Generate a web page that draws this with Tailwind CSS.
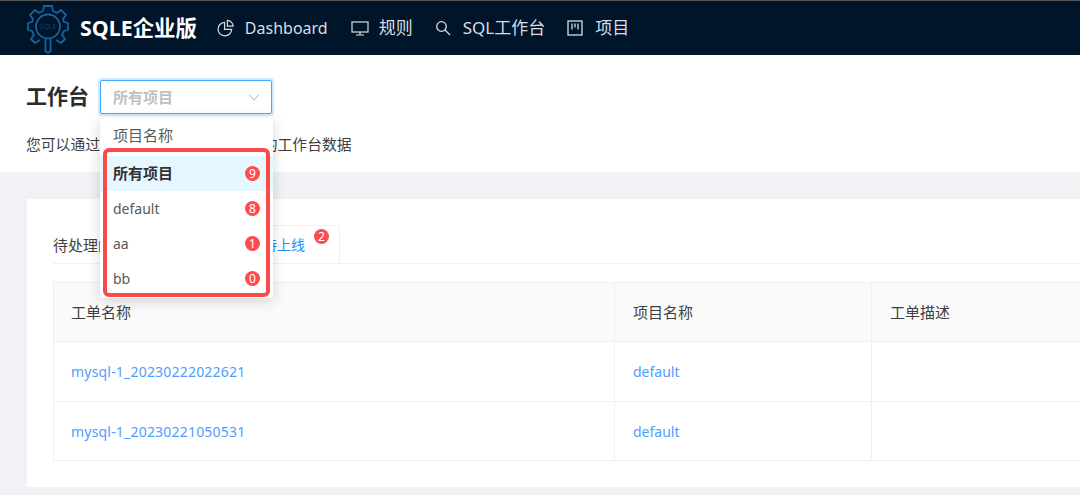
<!DOCTYPE html>
<html lang="zh-CN">
  <head>
    <meta charset="UTF-8" />
    <title>SQLE</title>
    <script src="https://cdn.jsdelivr.net/npm/@tailwindcss/browser@4"></script>
  </head>
  <body class="relative w-[1080px] h-[495px] overflow-hidden bg-[#f0f2f5] font-['Noto_Sans','Noto_Sans_CJK_SC',sans-serif] text-[#3f3f3f]">
    <!-- Top nav -->
    <header class="h-[55px] bg-[#001529] border-t border-[#555] flex items-center pl-[26px] text-[16px] text-[#d8dde2]">
      <svg class="w-[44px] h-[52px] shrink-0" viewBox="0 0 44 52" fill="none" stroke="#14659c" stroke-width="1.8" stroke-linejoin="round">
        <path d="M17 9L18 4H26L27 9L31 11L35 8L40 13L37 17L38 20L42 21V28L38 29L36 33L39 37L35 41L30 38M14 38L9 41L5 37L8 33L6 29L2 28V21L6 20L7 17L4 13L9 8L13 11L17 9" />
        <circle cx="22" cy="24.500" r="12" />
        <path d="M19.500 37v11a2.500 2.500 0 0 0 5 0V37" />
        <text x="22" y="27" font-size="7" fill="#0f3f60" stroke="none" text-anchor="middle">SQLE</text>
      </svg>
      <span class="ml-[10px] text-[21.4px] font-bold text-white">SQLE企业版</span>
      <svg class="ml-[20px] w-[17px] h-[18px]" viewBox="0 0 18 18" fill="none" stroke="currentColor" stroke-width="1.3">
        <path d="M8 3a7.200 7.200 0 1 0 7.500 7.500H8z" />
        <path d="M11 1v6h6a6.200 6.200 0 0 0-6-6z" />
      </svg>
      <span class="ml-[11px]">Dashboard</span>
      <svg class="ml-[23px] w-[18px] h-[16px]" viewBox="0 0 18 16" fill="none" stroke="currentColor" stroke-width="1.2">
        <rect x="1" y="2" width="16" height="10" />
        <path d="M9 12v3M5 15h8" />
      </svg>
      <span class="ml-[10px] text-[17px]">规则</span>
      <svg class="ml-[22px] w-[16px] h-[16px]" viewBox="0 0 16 16" fill="none" stroke="currentColor" stroke-width="1.3">
        <circle cx="6.500" cy="6.500" r="4.800" />
        <path d="M10 10l5 5" />
      </svg>
      <span class="ml-[12px] text-[17px]">SQL工作台</span>
      <svg class="ml-[22px] w-[16px] h-[16px]" viewBox="0 0 16 16" fill="none" stroke="currentColor" stroke-width="1.3">
        <rect x="1" y="1" width="14" height="14" />
        <path d="M5 3.500v6M8 3.500v4M11 3.500v6" />
      </svg>
      <span class="ml-[12px] text-[17px]">项目</span>
    </header>

    <!-- Page title -->
    <section class="h-[117px] bg-white pl-[26px] pt-[25px]">
      <div class="flex items-center h-[34px]">
        <h1 class="text-[21px] font-bold text-[#2b2b2b]">工作台</h1>
        <div class="ml-[11px] w-[172px] h-[34px] rounded-[2px] border border-[#40a9ff] shadow-[0_0_0_2px_rgba(24,144,255,0.2)] flex items-center justify-between pl-[12px] pr-[11px]">
          <span class="text-[15px] font-bold text-[#bfbfbf]">所有项目</span>
          <svg class="w-[12px] h-[12px]" viewBox="0 0 12 12" fill="none" stroke="#bfbfbf" stroke-width="1.100"><path d="M1 3.500l5 5.500 5-5.500" /></svg>
        </div>
      </div>
      <p class="mt-[19px] text-[14.800px] leading-[22px]">您可以通过切换项目来查看不同项目的工作台数据</p>
    </section>

    <!-- Card -->
    <main class="mt-[27px] ml-[27px] w-[1053px] h-[288px] bg-white pl-[26px] pt-[27px]">
      <div class="flex items-end h-[38px] border-b border-[#f0f0f0] text-[14px]">
        <span class="h-[37px] leading-[38px] text-[15px]">待处理的工单</span>
        <div class="relative ml-[20px] w-[177px] h-[38px] border border-b-0 border-[#f0f0f0] rounded-t-[2px] text-[#1890ff] text-right pr-[34px] leading-[37px]">
          待上线
          <span class="absolute right-[10px] top-[3px] w-[15px] h-[15px] rounded-full bg-[#ff4d4f] text-white text-[12px] leading-[15px] text-center">2</span>
        </div>
      </div>
      <table class="mt-[18px] w-[1027px] table-fixed border-collapse text-[14px]">
        <colgroup>
          <col class="w-[561px]" />
          <col class="w-[257px]" />
          <col />
        </colgroup>
        <thead>
          <tr class="h-[59px] bg-[#fafafa]">
            <th class="border border-[#f0f0f0] pl-[17px] text-left font-normal text-[15px]">工单名称</th>
            <th class="border border-[#f0f0f0] pl-[18px] text-left font-normal text-[15px]">项目名称</th>
            <th class="border border-[#f0f0f0] border-r-0 pl-[18px] text-left font-normal text-[15px]">工单描述</th>
          </tr>
        </thead>
        <tbody class="text-[#4d9eff]">
          <tr class="h-[60px]">
            <td class="border border-[#f0f0f0] pl-[17px] tracking-[0.2px]">mysql-1_20230222022621</td>
            <td class="border border-[#f0f0f0] pl-[18px]">default</td>
            <td class="border border-[#f0f0f0] border-r-0"></td>
          </tr>
          <tr class="h-[59px]">
            <td class="border border-[#f0f0f0] pl-[17px] tracking-[0.2px]">mysql-1_20230221050531</td>
            <td class="border border-[#f0f0f0] pl-[18px]">default</td>
            <td class="border border-[#f0f0f0] border-r-0"></td>
          </tr>
        </tbody>
      </table>
    </main>

    <!-- Dropdown over the page -->
    <div class="absolute left-[100px] top-[118px] w-[173px] h-[180px] bg-white rounded-[2px] shadow-[0_3px_14px_rgba(0,0,0,0.16)] text-[14px]">
      <div class="h-[38px] pl-[13px] leading-[34px] text-[15px] text-[#595959]">项目名称</div>
      <div class="h-[35px] bg-[#e6f7ff] flex items-center justify-between px-[13px] text-[15px] font-bold text-[#333]">
        <span>所有项目</span>
        <span class="w-[15px] h-[15px] rounded-full bg-[#ff4d4f] text-white text-[12px] leading-[15px] text-center font-normal">9</span>
      </div>
      <div class="h-[35px] flex items-center justify-between px-[13px] text-[#595959]">
        <span>default</span>
        <span class="w-[15px] h-[15px] rounded-full bg-[#ff4d4f] text-white text-[12px] leading-[15px] text-center">8</span>
      </div>
      <div class="h-[35px] flex items-center justify-between px-[13px] text-[#595959]">
        <span>aa</span>
        <span class="w-[15px] h-[15px] rounded-full bg-[#ff4d4f] text-white text-[12px] leading-[15px] text-center">1</span>
      </div>
      <div class="h-[35px] flex items-center justify-between px-[13px] text-[#595959]">
        <span>bb</span>
        <span class="w-[15px] h-[15px] rounded-full bg-[#ff4d4f] text-white text-[12px] leading-[15px] text-center">0</span>
      </div>
      <!-- red annotation frame -->
      <div class="absolute left-[3px] top-[30px] w-[167px] h-[149px] border-[4px] border-[#fa4b4b] rounded-[6px]"></div>
    </div>
  </body>
</html>
